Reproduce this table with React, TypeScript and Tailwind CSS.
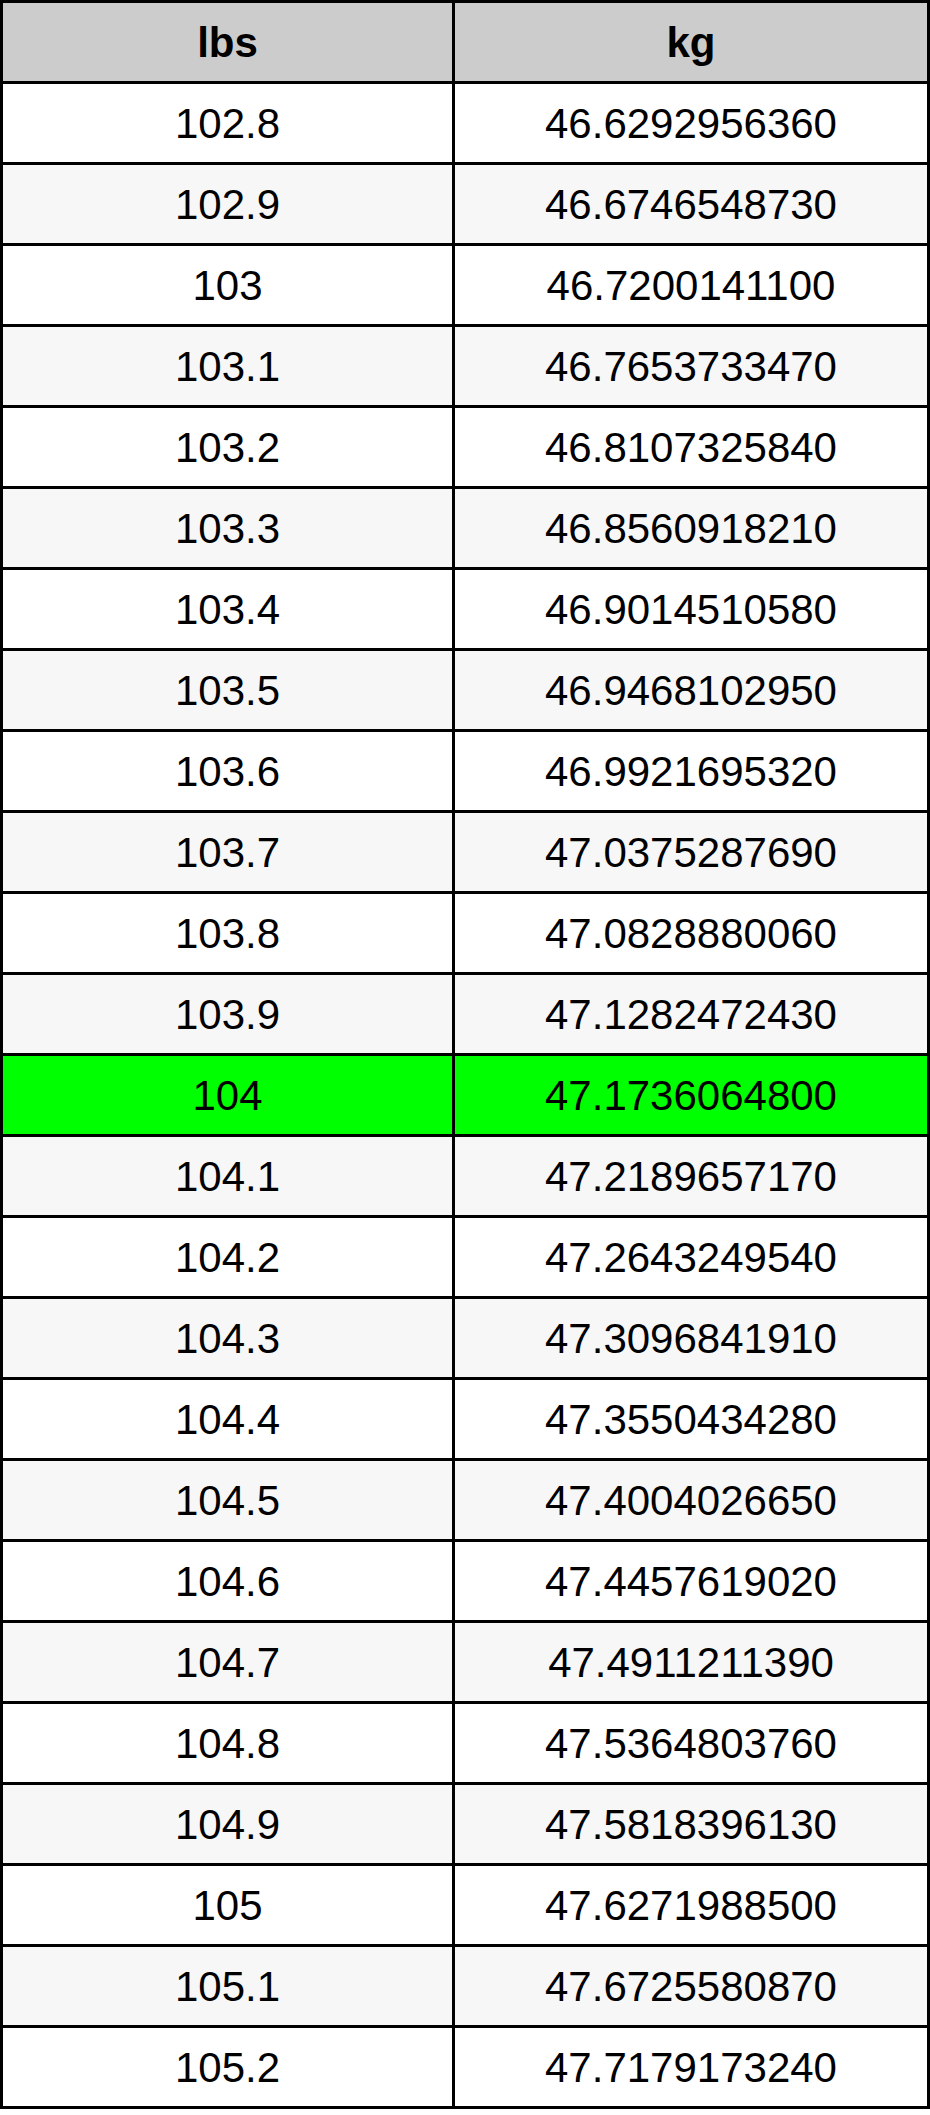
const rows: [string, string][] = [
  ["102.8", "46.6292956360"],
  ["102.9", "46.6746548730"],
  ["103", "46.7200141100"],
  ["103.1", "46.7653733470"],
  ["103.2", "46.8107325840"],
  ["103.3", "46.8560918210"],
  ["103.4", "46.9014510580"],
  ["103.5", "46.9468102950"],
  ["103.6", "46.9921695320"],
  ["103.7", "47.0375287690"],
  ["103.8", "47.0828880060"],
  ["103.9", "47.1282472430"],
  ["104", "47.1736064800"],
  ["104.1", "47.2189657170"],
  ["104.2", "47.2643249540"],
  ["104.3", "47.3096841910"],
  ["104.4", "47.3550434280"],
  ["104.5", "47.4004026650"],
  ["104.6", "47.4457619020"],
  ["104.7", "47.4911211390"],
  ["104.8", "47.5364803760"],
  ["104.9", "47.5818396130"],
  ["105", "47.6271988500"],
  ["105.1", "47.6725580870"],
  ["105.2", "47.7179173240"],
];

const cell = "h-[81px] flex items-center justify-center border-r-[3px] border-b-[3px] border-black";

export default function App() {
  return (
    <div className="w-[930px] bg-white font-['Liberation_Sans',Arial,sans-serif] text-[42px] text-black">
      <div className="grid grid-cols-[452px_475px] border-l-[3px] border-t-[3px] border-black">
        <div className={`${cell} bg-[#cccccc] font-bold`}>lbs</div>
        <div className={`${cell} bg-[#cccccc] font-bold`}>kg</div>
        {rows.map(([lbs, kg], i) => {
          // highlighted row is the exact value, others alternate
          const bg = lbs === "104" ? "bg-[#00ff00]" : i % 2 === 0 ? "bg-white" : "bg-[#f7f7f7]";
          return [
            <div key={lbs + "a"} className={`${cell} ${bg}`}>{lbs}</div>,
            <div key={lbs + "b"} className={`${cell} ${bg}`}>{kg}</div>,
          ];
        })}
      </div>
    </div>
  );
}
